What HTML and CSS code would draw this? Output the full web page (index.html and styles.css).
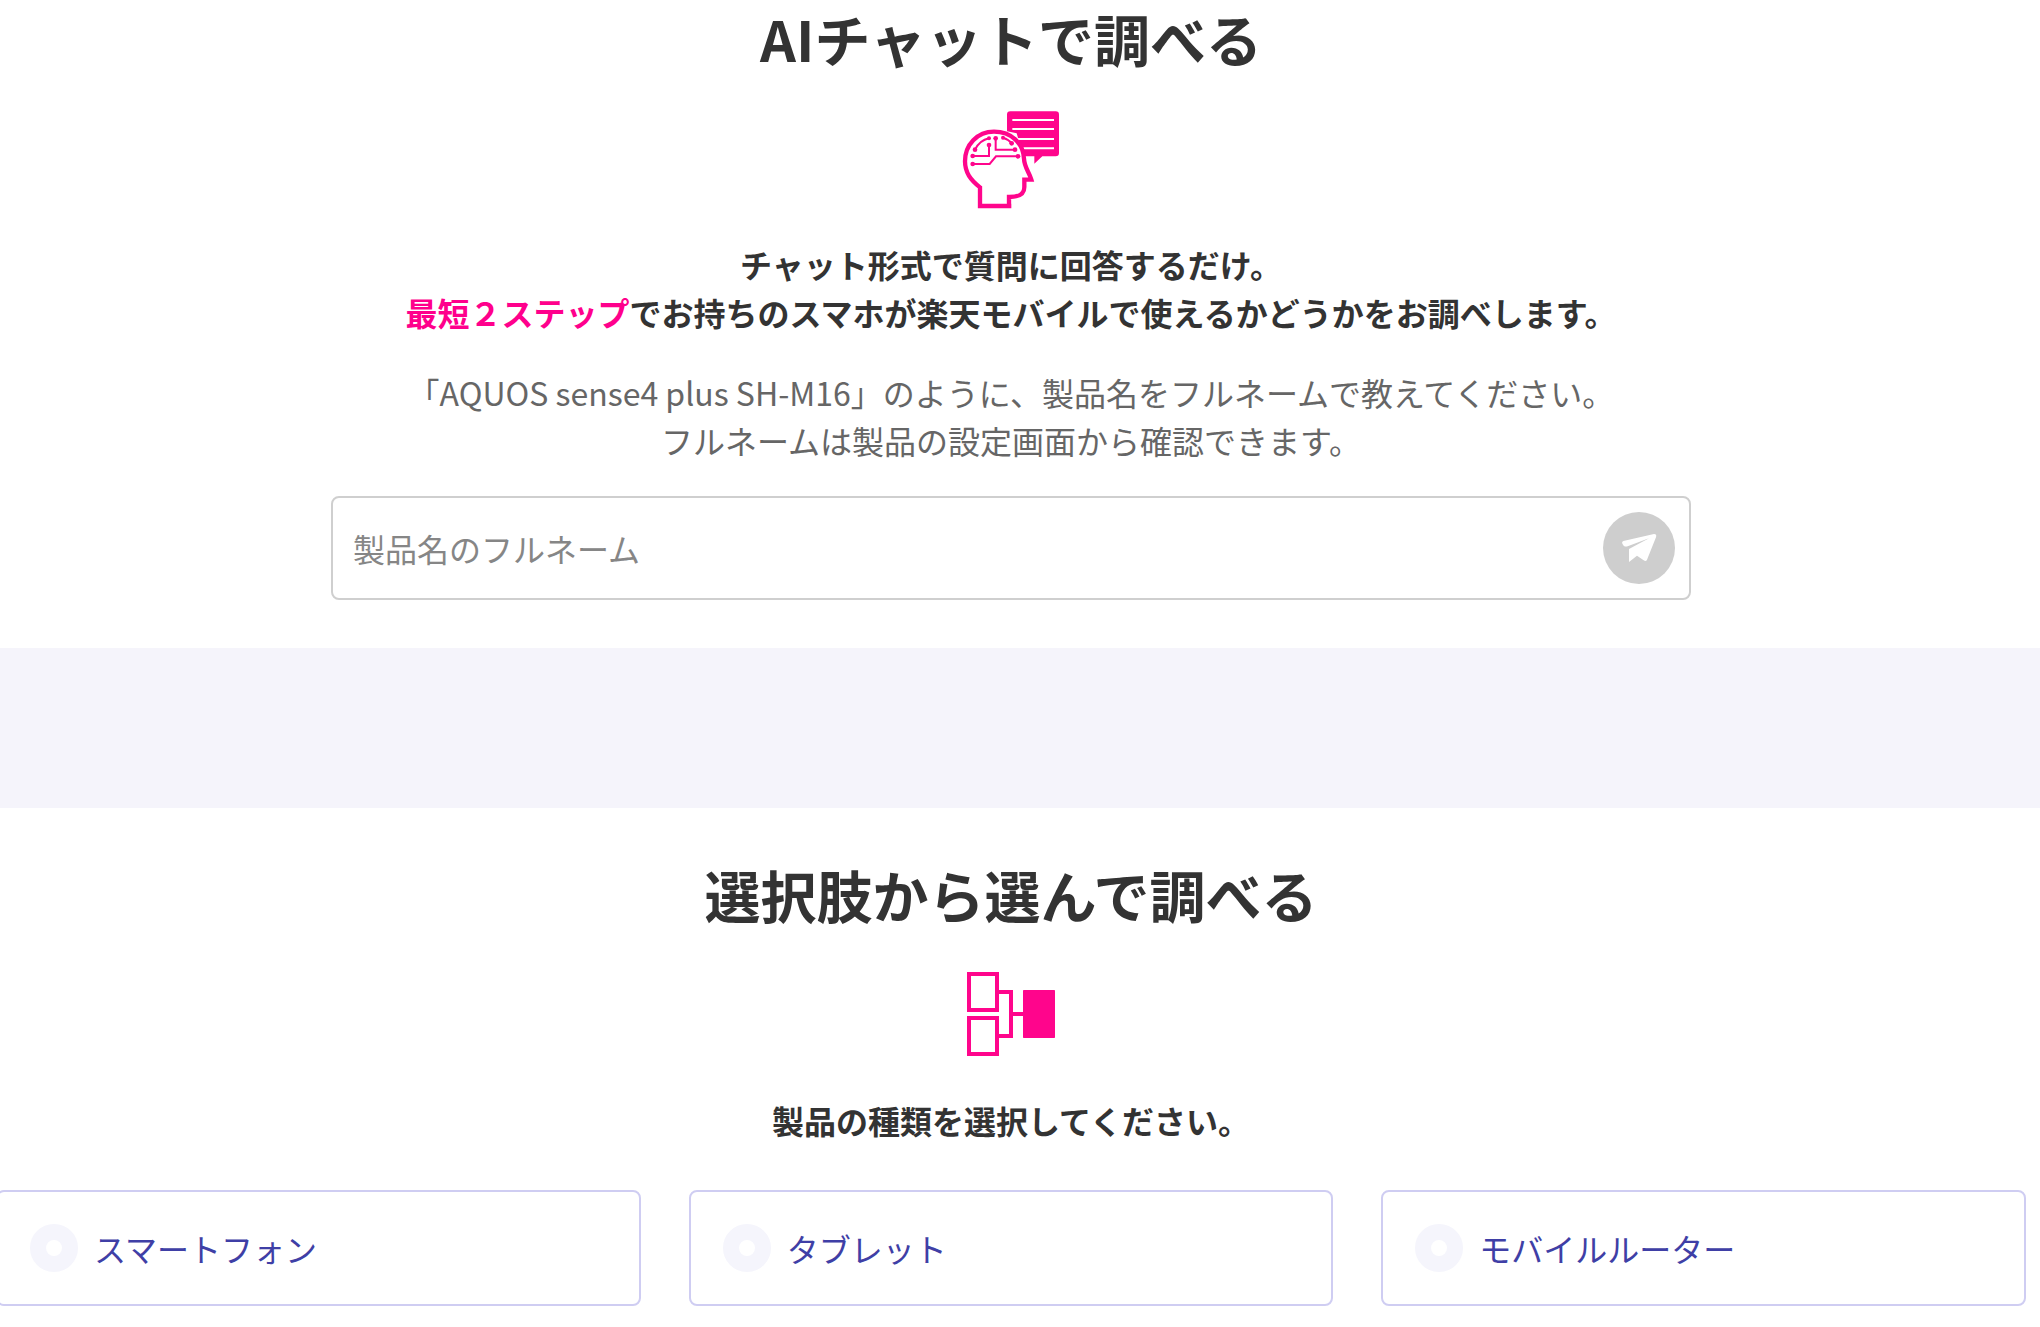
FILE: index.html
```html
<!DOCTYPE html>
<html lang="ja">
<head>
    <meta charset="UTF-8">
    <meta name="viewport" content="width=device-width, initial-scale=1.0">
    <title>製品対応状況確認</title>
    <link rel="stylesheet" href="styles.css">
</head>
<body>
    <!-- AI Chat -->
    <section class="section chat">
        <h2>AIチャットで調べる</h2>
        <svg class="icon" viewBox="69 66 288 288" aria-hidden="true">
            <!-- Speech bubble -->
            <path fill="#ff058c" d="M211 64H347Q357 64 357 74V189Q357 199 347 199H307L283 221V199H250L230 130L201 124V74Q201 64 211 64Z"/>
            <path stroke="#fff" stroke-width="6" d="M217 90H342M217 117H342M234 147H342M248 175H342"/>
            <!-- Head -->
            <path fill="#fff" stroke="#ff058c" stroke-width="13" d="M214 348H120V292C92 270 75 248 75 214C75 164 112 125 162 125C214 125 250 160 252 206C253 232 267 245 274 269H253V291C253 313 237 321 207 321V348"/>
            <g fill="none" stroke="#ff058c" stroke-width="6">
                <path d="M105 179Q119 151 147 145M189 143Q206 148 215 160M147 165V198H98M98 222H149L168 199H234M167 145V179H225"/>
            </g>
            <g fill="#ff058c">
                <circle cx="105" cy="179" r="7"/>
                <circle cx="147" cy="145" r="6"/>
                <circle cx="189" cy="143" r="6"/>
                <circle cx="215" cy="160" r="7"/>
                <circle cx="147" cy="165" r="7"/>
                <circle cx="98" cy="198" r="7"/>
                <circle cx="98" cy="222" r="7"/>
                <circle cx="234" cy="199" r="7"/>
                <circle cx="167" cy="145" r="7"/>
                <circle cx="225" cy="179" r="7"/>
            </g>
        </svg>
        <p class="lead">チャット形式で質問に回答するだけ。<br><strong>最短２ステップ</strong>でお持ちのスマホが楽天モバイルで使えるかどうかをお調べします。</p>
        <p class="note">「AQUOS sense4 plus SH-M16」のように、製品名をフルネームで教えてください。<br>フルネームは製品の設定画面から確認できます。</p>
        <form class="chat-form">
            <input type="text" class="chat-input" aria-label="製品名のフルネーム" placeholder="製品名のフルネーム">
            <button type="button" class="send-btn" aria-label="送信">
                <svg viewBox="129 96 216 216" aria-hidden="true">
                    <path fill="#fff" d="M190 183L282 162Q291 162 288 172L261 239Q258 246 251 241L231 227L207 246V207L267 175L203 199Q196 201 191 197Q182 187 190 183Z"/>
                </svg>
            </button>
        </form>
    </section>

    <!-- Choices -->
    <section class="section choices">
        <h2>選択肢から選んで調べる</h2>
        <svg class="icon" viewBox="69 54 288 288" aria-hidden="true">
            <g fill="none" stroke="#ff058c" stroke-width="12">
                <rect x="87" y="72" width="84" height="108"/>
                <rect x="87" y="204" width="84" height="108"/>
                <path d="M177 126H213V258H177M213 192H249"/>
            </g>
            <rect x="249" y="120" width="96" height="144" rx="2" fill="#ff058c"/>
        </svg>
        <p class="lead">製品の種類を選択してください。</p>
        <div class="card-list">
            <label class="card">
                <input type="radio" name="product" value="smartphone">
                <span>スマートフォン</span>
            </label>
            <label class="card">
                <input type="radio" name="product" value="tablet">
                <span>タブレット</span>
            </label>
            <label class="card">
                <input type="radio" name="product" value="router">
                <span>モバイルルーター</span>
            </label>
        </div>
    </section>
</body>
</html>
```

FILE: styles.css
```css
* {
    box-sizing: border-box;
}

body {
    margin: 0;
    background: #f5f4fb;
    color: #333;
    font-family: "Noto Sans CJK JP", sans-serif;
    font-size: 32px;
    line-height: 48px;
    overflow-x: hidden;
}

.section {
    display: flex;
    flex-direction: column;
    align-items: center;
    padding-right: 18px;
    background: #fff;
    text-align: center;
}

.chat {
    padding-bottom: 48px;
    margin-bottom: 160px;
}

.choices {
    padding-top: 48px;
    padding-bottom: 48px;
}

h2 {
    margin: 0 0 36px;
    font-size: 56px;
    line-height: 76px;
    font-weight: 700;
}

.icon {
    width: 96px;
    height: 96px;
    margin-bottom: 32px;
    overflow: visible;
}

.lead {
    margin: 0 0 32px;
    font-weight: 700;
}

.lead strong {
    color: #ff008c;
    font-weight: 700;
}

.note {
    margin: 0 0 32px;
    color: #666;
}

/* Chat form */
.chat-form {
    display: flex;
    align-items: center;
    width: 100%;
    max-width: 1360px;
    padding: 14px;
    padding-left: 20px;
    border: 2px solid #cfcfcf;
    border-radius: 8px;
}

.chat-input {
    flex: 1;
    min-width: 0;
    padding: 0;
    border: none;
    outline: none;
    background: none;
    color: #333;
    font: inherit;
}

.chat-input::placeholder {
    color: #868686;
    opacity: 1;
}

.send-btn {
    width: 72px;
    height: 72px;
    padding: 0;
    border: none;
    border-radius: 50%;
    background: #cecece;
    cursor: pointer;
}

.send-btn svg {
    display: block;
    width: 100%;
}

/* Product cards */
.card-list {
    display: grid;
    grid-template-columns: repeat(3, 1fr);
    gap: 48px;
    align-self: stretch;
    margin: 14px -4px 0;
}

.card {
    display: flex;
    align-items: center;
    gap: 16px;
    padding: 32px;
    border: 2px solid #cfcdf2;
    border-radius: 8px;
    color: #3f3fa6;
    cursor: pointer;
}

.card input {
    appearance: none;
    width: 48px;
    height: 48px;
    margin: 0;
    border: 16px solid #f5f5fc;
    border-radius: 50%;
    background: #fff;
    cursor: pointer;
}

.card input:checked {
    border-color: #ff008c;
}
```
